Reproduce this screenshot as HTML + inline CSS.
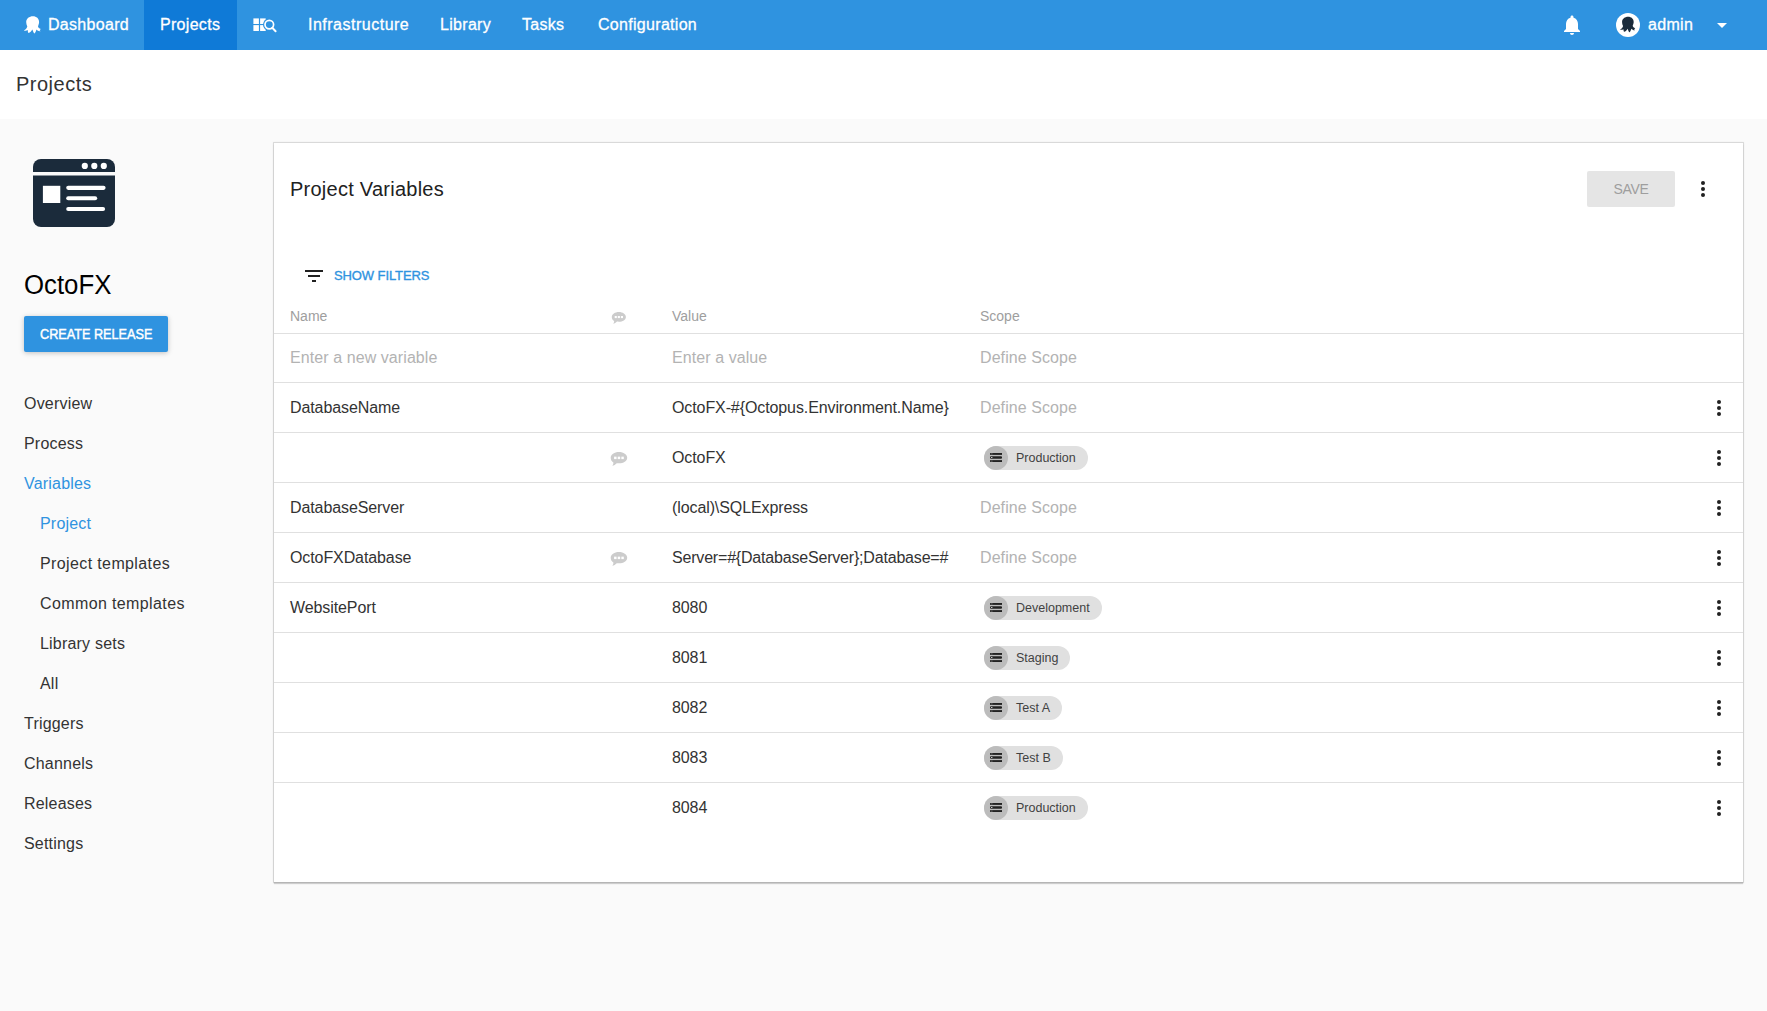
<!DOCTYPE html>
<html><head><meta charset="utf-8">
<style>
*{box-sizing:border-box;margin:0;padding:0}
html,body{width:1767px;height:1011px;overflow:hidden;background:#fafafa;font-family:"Liberation Sans",sans-serif;color:#333}
.abs{position:absolute}
svg{position:absolute;overflow:visible}
#nav{position:absolute;left:0;top:0;width:1767px;height:50px;background:#2f93e0}
.tab{position:absolute;top:0;height:50px;line-height:50px;color:#fff;font-size:16px;white-space:nowrap;-webkit-text-stroke:0.3px #fff;letter-spacing:0.3px}
.tabbg{position:absolute;top:0;height:50px;background:#0f7ad7}
#hdr{position:absolute;left:0;top:50px;width:1767px;height:69px;background:#fff}
.side{position:absolute;left:24px;font-size:16px;color:#333;white-space:nowrap;line-height:20px;letter-spacing:0.2px}
.side.sub{left:40px}
.side.sel{color:#2f93e0}
#card{position:absolute;left:274px;top:143px;width:1469px;height:739px;background:#fff;box-shadow:0 0 0 1px rgba(0,0,0,.1),0 0 2px 1px rgba(0,0,0,.05),0 2px 1px 0 rgba(0,0,0,.16)}
.hl{position:absolute;left:0;width:1469px;height:1px;background:#e0e0e0}
.cell{position:absolute;line-height:20px;font-size:16px;color:#333;white-space:nowrap;letter-spacing:-0.1px}
.cell.ph{letter-spacing:0.08px}
.val{}
.ph{color:#b3b3b3}
.chip{position:absolute;height:24px;border-radius:12px;background:#e0e0e0;font-size:12.5px;color:#424242;line-height:24px;padding-left:32px;padding-right:12px;white-space:nowrap}
.chip .av{position:absolute;left:0;top:0;width:24px;height:24px;border-radius:50%;background:#bcbcbc}
.chip svg{left:6px;top:7px}
</style></head><body>
<div id="nav">
  <div class="tabbg" style="left:144px;width:93px"></div>
  <svg style="left:20px;top:10px" width="28" height="28" viewBox="0 0 28 28"><path fill="#fff" d="M12.9 6.2C16.5 6.2 19.1 8.6 19.1 11.9C19.1 13.6 18.4 15.0 18.0 16.3C18.2 17.6 19.3 18.6 20.8 19.0L19.6 20.2L20.6 21.2C19.2 21.6 17.6 20.8 16.4 19.6C16.2 20.8 15.6 22.6 14.6 23.4C13.6 23.2 13.0 21.0 12.4 19.4C11.6 20.6 10.0 22.8 8.6 22.9C7.9 22.6 7.8 21.2 7.7 20.1C6.6 20.7 5.2 20.9 3.9 20.5C5.4 19.6 6.9 18.3 7.3 16.4C6.6 15.0 6.2 13.6 6.2 11.9C6.2 8.6 9.3 6.2 12.9 6.2Z"/></svg>
  <div class="tab" style="left:48px">Dashboard</div>
  <div class="tab" style="left:160px">Projects</div>
  <svg style="left:248px;top:12px" width="34" height="26" viewBox="0 0 34 26"><g fill="#fff"><rect x="5.4" y="6.4" width="5.5" height="5.6"/><rect x="5.4" y="13.1" width="5.5" height="5.9"/><rect x="12.1" y="6.4" width="5.6" height="5.6"/><rect x="12.1" y="13.1" width="5.6" height="5.9"/></g><circle cx="21.3" cy="12.6" r="6.3" fill="#2f93e0"/><circle cx="21.3" cy="12.6" r="4.3" fill="none" stroke="#fff" stroke-width="1.7"/><line x1="24.3" y1="15.8" x2="27.6" y2="19.2" stroke="#fff" stroke-width="2" stroke-linecap="round"/></svg>
  <div class="tab" style="left:308px;letter-spacing:0.5px">Infrastructure</div>
  <div class="tab" style="left:440px">Library</div>
  <div class="tab" style="left:522px">Tasks</div>
  <div class="tab" style="left:598px">Configuration</div>
  <svg style="left:1560px;top:13px" width="24" height="24" viewBox="0 0 24 24"><path fill="#fff" d="M12 22c1.1 0 2-.9 2-2h-4c0 1.1.89 2 2 2zm6-6v-5c0-3.07-1.64-5.64-4.5-6.32V4c0-.83-.67-1.5-1.5-1.5s-1.5.67-1.5 1.5v.68C7.63 5.36 6 7.92 6 11v5l-2 2v1h16v-1l-2-2z"/></svg>
  <div class="abs" style="left:1616px;top:13px;width:24px;height:24px;border-radius:50%;background:#fff"></div>
  <svg style="left:1612px;top:9px" width="32" height="32" viewBox="0 0 32 32"><g transform="translate(16.1 7.75) scale(0.9) translate(-12.9 -6.2)"><path fill="#1b2b3b" d="M12.9 6.2C16.5 6.2 19.1 8.6 19.1 11.9C19.1 13.6 18.4 15.0 18.0 16.3C18.2 17.6 19.3 18.6 20.8 19.0L19.6 20.2L20.6 21.2C19.2 21.6 17.6 20.8 16.4 19.6C16.2 20.8 15.6 22.6 14.6 23.4C13.6 23.2 13.0 21.0 12.4 19.4C11.6 20.6 10.0 22.8 8.6 22.9C7.9 22.6 7.8 21.2 7.7 20.1C6.6 20.7 5.2 20.9 3.9 20.5C5.4 19.6 6.9 18.3 7.3 16.4C6.6 15.0 6.2 13.6 6.2 11.9C6.2 8.6 9.3 6.2 12.9 6.2Z"/></g></svg>
  <div class="tab" style="left:1648px">admin</div>
  <svg style="left:1710px;top:13px" width="24" height="24" viewBox="0 0 24 24"><path fill="#fff" d="M7 10l5 5 5-5z"/></svg>
</div>
<div id="hdr"><div class="abs" style="left:16px;top:22px;font-size:20px;color:#333;line-height:24px;letter-spacing:0.5px">Projects</div></div>

<svg style="left:33px;top:159px" width="82" height="68" viewBox="0 0 82 68">
  <path fill="#1b2b3b" d="M0 13V8A8 8 0 0 1 8 0H74A8 8 0 0 1 82 8V13Z"/>
  <path fill="#1b2b3b" d="M0 16.5H82V60A8 8 0 0 1 74 68H8A8 8 0 0 1 0 60Z"/>
  <g fill="#fff"><circle cx="51.8" cy="6.9" r="3.1"/><circle cx="61.3" cy="6.9" r="3.1"/><circle cx="70.8" cy="6.9" r="3.1"/>
  <rect x="9.9" y="26.8" width="17.4" height="17.2"/>
  <rect x="33.2" y="26.8" width="39.4" height="4.1" rx="2.05"/>
  <rect x="33.2" y="37.2" width="31" height="4.1" rx="2.05"/>
  <rect x="33.2" y="47.9" width="38.9" height="4.1" rx="2.05"/></g>
</svg>
<div class="abs" style="left:24px;top:270px;font-size:27px;color:#000;line-height:30px;transform:scaleX(0.955);transform-origin:0 0">OctoFX</div>
<div class="abs" style="left:24px;top:316px;width:144px;height:36px;background:#2f93e0;border-radius:2px;color:#fff;font-size:14px;line-height:36px;box-shadow:0 1px 6px rgba(0,0,0,.12),0 1px 4px rgba(0,0,0,.12)"><span style="position:absolute;left:16px;top:0;-webkit-text-stroke:0.45px #fff;transform:scaleX(0.905);transform-origin:0 0;white-space:nowrap">CREATE RELEASE</span></div>

<div class="side" style="top:394px">Overview</div>
<div class="side" style="top:434px">Process</div>
<div class="side sel" style="top:474px">Variables</div>
<div class="side sub sel" style="top:514px">Project</div>
<div class="side sub" style="top:554px;letter-spacing:0.38px">Project templates</div>
<div class="side sub" style="top:594px;letter-spacing:0.38px">Common templates</div>
<div class="side sub" style="top:634px">Library sets</div>
<div class="side sub" style="top:674px">All</div>
<div class="side" style="top:714px">Triggers</div>
<div class="side" style="top:754px">Channels</div>
<div class="side" style="top:794px">Releases</div>
<div class="side" style="top:834px">Settings</div>

<div id="card">
  <div class="abs" style="left:16px;top:34px;font-size:20px;color:#212121;line-height:24px;letter-spacing:0.25px">Project Variables</div>
  <div class="abs" style="left:1313px;top:28px;width:88px;height:36px;background:#e5e5e5;border-radius:2px;color:#9e9e9e;font-size:14px;line-height:36px;text-align:center;letter-spacing:-0.3px">SAVE</div>
  <svg style="left:1417px;top:34px" width="24" height="24" viewBox="0 0 24 24"><g fill="#212121"><circle cx="12" cy="6" r="2"/><circle cx="12" cy="12" r="2"/><circle cx="12" cy="18" r="2"/></g></svg>
  <svg style="left:28px;top:121px" width="24" height="24" viewBox="0 0 24 24"><path fill="#212121" d="M10 18h4v-2h-4v2zM3 6v2h18V6H3zm3 7h12v-2H6v2z"/></svg>
  <div class="abs" style="left:60px;top:124.5px;font-size:13px;color:#2f93e0;-webkit-text-stroke:0.35px #2f93e0;letter-spacing:-0.1px;line-height:16px">SHOW FILTERS</div>
  <div class="abs" style="left:16px;top:165px;font-size:14px;color:#9e9e9e;line-height:16px">Name</div>
  <div class="abs" style="left:398px;top:165px;font-size:14px;color:#9e9e9e;line-height:16px">Value</div>
  <div class="abs" style="left:706px;top:165px;font-size:14px;color:#9e9e9e;line-height:16px">Scope</div>
  <div class="hl" style="top:190px"></div>
  <div class="hl" style="top:239px"></div>
  <div class="hl" style="top:289px"></div>
  <div class="hl" style="top:339px"></div>
  <div class="hl" style="top:389px"></div>
  <div class="hl" style="top:439px"></div>
  <div class="hl" style="top:489px"></div>
  <div class="hl" style="top:539px"></div>
  <div class="hl" style="top:589px"></div>
  <div class="hl" style="top:639px"></div>
<!--ROWS-->
<svg style="left:332px;top:161px" width="26" height="26" viewBox="0 0 26 26"><path fill="#cccccc" d="M12.85 8C16.75 8 19.9 10.2 19.9 12.9C19.9 15.6 16.75 17.75 12.85 17.75C12.2 17.75 11.6 17.7 11 17.6C10 18.6 8.5 19.6 7.2 19.8C7.8 19.0 8.2 17.8 8.1 16.9C6.5 16 5.8 14.5 5.8 12.9C5.8 10.2 8.95 8 12.85 8Z"/><g fill="#fff"><rect x="8.7" y="12" width="2.1" height="2.1"/><rect x="11.8" y="12" width="2.1" height="2.1"/><rect x="14.9" y="12" width="2.1" height="2.1"/></g></svg>
<div class="cell ph" style="left:16px;top:205px">Enter a new variable</div>
<div class="cell ph" style="left:398px;top:205px">Enter a value</div>
<div class="cell ph" style="left:706px;top:205px">Define Scope</div>
<div class="cell" style="left:16px;top:255px">DatabaseName</div>
<div class="cell val" style="left:398px;top:255px">OctoFX-#{Octopus.Environment.Name}</div>
<div class="cell ph" style="left:706px;top:255px">Define Scope</div>
<svg style="left:1433px;top:253px" width="24" height="24" viewBox="0 0 24 24"><g fill="#212121"><circle cx="12" cy="6" r="2"/><circle cx="12" cy="12" r="2"/><circle cx="12" cy="18" r="2"/></g></svg>
<div class="cell val" style="left:398px;top:305px">OctoFX</div>
<div class="chip" style="left:710px;top:303px"><div class="av"></div><svg width="12" height="10" viewBox="0 0 12 10"><g fill="#222"><rect x="0" y="0" width="12" height="1.9"/><rect x="0" y="3.2" width="12" height="2.5" rx="1"/><rect x="0" y="7.1" width="12" height="1.9"/></g><g fill="#4a4a4a"><rect x="0.6" y="0" width="2" height="1.9"/><rect x="0.6" y="7.1" width="2" height="1.9"/></g><rect x="1" y="4" width="1.4" height="0.9" fill="#ddd"/></svg>Production</div>
<svg style="left:332px;top:302px" width="26" height="26" viewBox="0 0 26 26"><g transform="translate(12.95 12.7) scale(1.17) translate(-12.85 -12.9)"><path fill="#cccccc" d="M12.85 8C16.75 8 19.9 10.2 19.9 12.9C19.9 15.6 16.75 17.75 12.85 17.75C12.2 17.75 11.6 17.7 11 17.6C10 18.6 8.5 19.6 7.2 19.8C7.8 19.0 8.2 17.8 8.1 16.9C6.5 16 5.8 14.5 5.8 12.9C5.8 10.2 8.95 8 12.85 8Z"/><g fill="#fff"><rect x="8.7" y="12" width="2.1" height="2.1"/><rect x="11.8" y="12" width="2.1" height="2.1"/><rect x="14.9" y="12" width="2.1" height="2.1"/></g></g></svg>
<svg style="left:1433px;top:303px" width="24" height="24" viewBox="0 0 24 24"><g fill="#212121"><circle cx="12" cy="6" r="2"/><circle cx="12" cy="12" r="2"/><circle cx="12" cy="18" r="2"/></g></svg>
<div class="cell" style="left:16px;top:355px">DatabaseServer</div>
<div class="cell val" style="left:398px;top:355px">(local)\SQLExpress</div>
<div class="cell ph" style="left:706px;top:355px">Define Scope</div>
<svg style="left:1433px;top:353px" width="24" height="24" viewBox="0 0 24 24"><g fill="#212121"><circle cx="12" cy="6" r="2"/><circle cx="12" cy="12" r="2"/><circle cx="12" cy="18" r="2"/></g></svg>
<div class="cell" style="left:16px;top:405px">OctoFXDatabase</div>
<div class="cell val" style="left:398px;top:405px;letter-spacing:-0.19px">Server=#{DatabaseServer};Database=#</div>
<div class="cell ph" style="left:706px;top:405px">Define Scope</div>
<svg style="left:332px;top:402px" width="26" height="26" viewBox="0 0 26 26"><g transform="translate(12.95 12.7) scale(1.17) translate(-12.85 -12.9)"><path fill="#cccccc" d="M12.85 8C16.75 8 19.9 10.2 19.9 12.9C19.9 15.6 16.75 17.75 12.85 17.75C12.2 17.75 11.6 17.7 11 17.6C10 18.6 8.5 19.6 7.2 19.8C7.8 19.0 8.2 17.8 8.1 16.9C6.5 16 5.8 14.5 5.8 12.9C5.8 10.2 8.95 8 12.85 8Z"/><g fill="#fff"><rect x="8.7" y="12" width="2.1" height="2.1"/><rect x="11.8" y="12" width="2.1" height="2.1"/><rect x="14.9" y="12" width="2.1" height="2.1"/></g></g></svg>
<svg style="left:1433px;top:403px" width="24" height="24" viewBox="0 0 24 24"><g fill="#212121"><circle cx="12" cy="6" r="2"/><circle cx="12" cy="12" r="2"/><circle cx="12" cy="18" r="2"/></g></svg>
<div class="cell" style="left:16px;top:455px">WebsitePort</div>
<div class="cell val" style="left:398px;top:455px">8080</div>
<div class="chip" style="left:710px;top:453px"><div class="av"></div><svg width="12" height="10" viewBox="0 0 12 10"><g fill="#222"><rect x="0" y="0" width="12" height="1.9"/><rect x="0" y="3.2" width="12" height="2.5" rx="1"/><rect x="0" y="7.1" width="12" height="1.9"/></g><g fill="#4a4a4a"><rect x="0.6" y="0" width="2" height="1.9"/><rect x="0.6" y="7.1" width="2" height="1.9"/></g><rect x="1" y="4" width="1.4" height="0.9" fill="#ddd"/></svg>Development</div>
<svg style="left:1433px;top:453px" width="24" height="24" viewBox="0 0 24 24"><g fill="#212121"><circle cx="12" cy="6" r="2"/><circle cx="12" cy="12" r="2"/><circle cx="12" cy="18" r="2"/></g></svg>
<div class="cell val" style="left:398px;top:505px">8081</div>
<div class="chip" style="left:710px;top:503px"><div class="av"></div><svg width="12" height="10" viewBox="0 0 12 10"><g fill="#222"><rect x="0" y="0" width="12" height="1.9"/><rect x="0" y="3.2" width="12" height="2.5" rx="1"/><rect x="0" y="7.1" width="12" height="1.9"/></g><g fill="#4a4a4a"><rect x="0.6" y="0" width="2" height="1.9"/><rect x="0.6" y="7.1" width="2" height="1.9"/></g><rect x="1" y="4" width="1.4" height="0.9" fill="#ddd"/></svg>Staging</div>
<svg style="left:1433px;top:503px" width="24" height="24" viewBox="0 0 24 24"><g fill="#212121"><circle cx="12" cy="6" r="2"/><circle cx="12" cy="12" r="2"/><circle cx="12" cy="18" r="2"/></g></svg>
<div class="cell val" style="left:398px;top:555px">8082</div>
<div class="chip" style="left:710px;top:553px"><div class="av"></div><svg width="12" height="10" viewBox="0 0 12 10"><g fill="#222"><rect x="0" y="0" width="12" height="1.9"/><rect x="0" y="3.2" width="12" height="2.5" rx="1"/><rect x="0" y="7.1" width="12" height="1.9"/></g><g fill="#4a4a4a"><rect x="0.6" y="0" width="2" height="1.9"/><rect x="0.6" y="7.1" width="2" height="1.9"/></g><rect x="1" y="4" width="1.4" height="0.9" fill="#ddd"/></svg>Test A</div>
<svg style="left:1433px;top:553px" width="24" height="24" viewBox="0 0 24 24"><g fill="#212121"><circle cx="12" cy="6" r="2"/><circle cx="12" cy="12" r="2"/><circle cx="12" cy="18" r="2"/></g></svg>
<div class="cell val" style="left:398px;top:605px">8083</div>
<div class="chip" style="left:710px;top:603px"><div class="av"></div><svg width="12" height="10" viewBox="0 0 12 10"><g fill="#222"><rect x="0" y="0" width="12" height="1.9"/><rect x="0" y="3.2" width="12" height="2.5" rx="1"/><rect x="0" y="7.1" width="12" height="1.9"/></g><g fill="#4a4a4a"><rect x="0.6" y="0" width="2" height="1.9"/><rect x="0.6" y="7.1" width="2" height="1.9"/></g><rect x="1" y="4" width="1.4" height="0.9" fill="#ddd"/></svg>Test B</div>
<svg style="left:1433px;top:603px" width="24" height="24" viewBox="0 0 24 24"><g fill="#212121"><circle cx="12" cy="6" r="2"/><circle cx="12" cy="12" r="2"/><circle cx="12" cy="18" r="2"/></g></svg>
<div class="cell val" style="left:398px;top:655px">8084</div>
<div class="chip" style="left:710px;top:653px"><div class="av"></div><svg width="12" height="10" viewBox="0 0 12 10"><g fill="#222"><rect x="0" y="0" width="12" height="1.9"/><rect x="0" y="3.2" width="12" height="2.5" rx="1"/><rect x="0" y="7.1" width="12" height="1.9"/></g><g fill="#4a4a4a"><rect x="0.6" y="0" width="2" height="1.9"/><rect x="0.6" y="7.1" width="2" height="1.9"/></g><rect x="1" y="4" width="1.4" height="0.9" fill="#ddd"/></svg>Production</div>
<svg style="left:1433px;top:653px" width="24" height="24" viewBox="0 0 24 24"><g fill="#212121"><circle cx="12" cy="6" r="2"/><circle cx="12" cy="12" r="2"/><circle cx="12" cy="18" r="2"/></g></svg>
<!--/ROWS-->
</div>
</body></html>
